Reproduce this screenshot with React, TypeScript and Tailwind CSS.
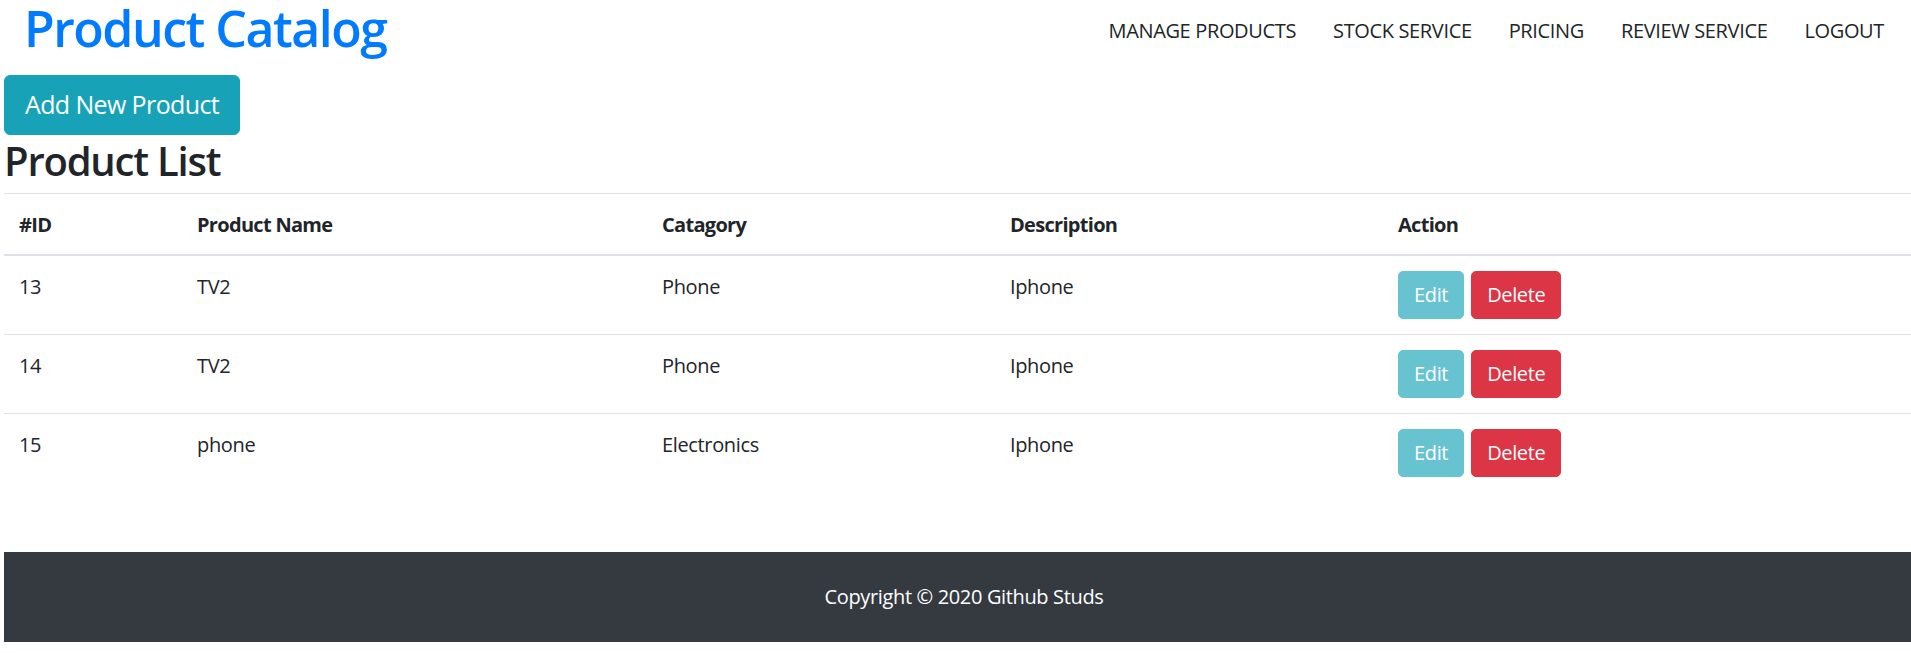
import React from "react";

interface Product {
  id: number;
  name: string;
  category: string;
  description: string;
}

const products: Product[] = [
  { id: 13, name: "TV2", category: "Phone", description: "Iphone" },
  { id: 14, name: "TV2", category: "Phone", description: "Iphone" },
  { id: 15, name: "phone", category: "Electronics", description: "Iphone" },
];

const navLinks = ["Manage Products", "Stock Service", "Pricing", "Review Service", "Logout"];

export default function App() {
  return (
    <div className="min-h-screen bg-white text-[#212529] tracking-[-0.022em] font-['Open_Sans','Noto_Sans',sans-serif]">
      <nav className="flex h-[66px] items-start justify-between pl-[24px] pr-[27px]">
        <h1 className="text-[50px] font-semibold leading-[56px] tracking-[-0.03em] text-[#007bff]">Product Catalog</h1>
        <ul className="mt-[16px] flex gap-[37px] text-[20px] leading-[30px] uppercase">
          {navLinks.map(l => (
            <li key={l}>
              <a href="#" className="text-[#212529]">{l}</a>
            </li>
          ))}
        </ul>
      </nav>

      <main className="pl-[4px]">
        <button className="mt-[9px] rounded-[6px] border border-[#17a2b8] bg-[#17a2b8] px-[20px] py-[10px] text-[25px] leading-[37.5px] tracking-[-0.025em] text-white">
          Add New Product
        </button>
        <h2 className="mb-[8px] pt-[2px] text-[40px] font-semibold leading-[48px] tracking-[-0.03em]">Product List</h2>

        <table className="w-full border-collapse text-left text-[20px] leading-[30px]">
          <thead>
            <tr>
              <th className="w-[178px] border-t border-b-2 border-[#dee2e6] px-[15px] pt-[16px] pb-[14px] font-bold tracking-[-0.035em]">#ID</th>
              <th className="w-[465px] border-t border-b-2 border-[#dee2e6] px-[15px] pt-[16px] pb-[14px] font-bold tracking-[-0.035em]">Product Name</th>
              <th className="w-[348px] border-t border-b-2 border-[#dee2e6] px-[15px] pt-[16px] pb-[14px] font-bold tracking-[-0.035em]">Catagory</th>
              <th className="w-[388px] border-t border-b-2 border-[#dee2e6] px-[15px] pt-[16px] pb-[14px] font-bold tracking-[-0.035em]">Description</th>
              <th className="border-t border-b-2 border-[#dee2e6] px-[15px] pt-[16px] pb-[14px] font-bold tracking-[-0.035em]">Action</th>
            </tr>
          </thead>
          <tbody>
            {products.map(p => (
              <tr key={p.id}>
                <td className="border-t border-[#dee2e6] px-[15px] pt-[16px] pb-[14px] align-top">{p.id}</td>
                <td className="border-t border-[#dee2e6] px-[15px] pt-[16px] pb-[14px] align-top">{p.name}</td>
                <td className="border-t border-[#dee2e6] px-[15px] pt-[16px] pb-[14px] align-top">{p.category}</td>
                <td className="border-t border-[#dee2e6] px-[15px] pt-[16px] pb-[14px] align-top">{p.description}</td>
                <td className="border-t border-[#dee2e6] p-[15px] align-top">
                  <div className="flex gap-[7px]">
                    <button className="rounded-[5px] border border-[#68c3d1] bg-[#68c3d1] px-[15px] py-[8px] text-[20px] leading-[30px] text-white">
                      Edit
                    </button>
                    <button className="rounded-[5px] border border-[#dc3545] bg-[#dc3545] px-[15px] py-[8px] text-[20px] leading-[30px] text-white">
                      Delete
                    </button>
                  </div>
                </td>
              </tr>
            ))}
          </tbody>
        </table>

        <footer className="mt-[60px] flex h-[90px] items-center justify-center bg-[#343a40] pl-[13px] text-[20px] text-white">
          Copyright © 2020 Github Studs
        </footer>
      </main>
    </div>
  );
}
